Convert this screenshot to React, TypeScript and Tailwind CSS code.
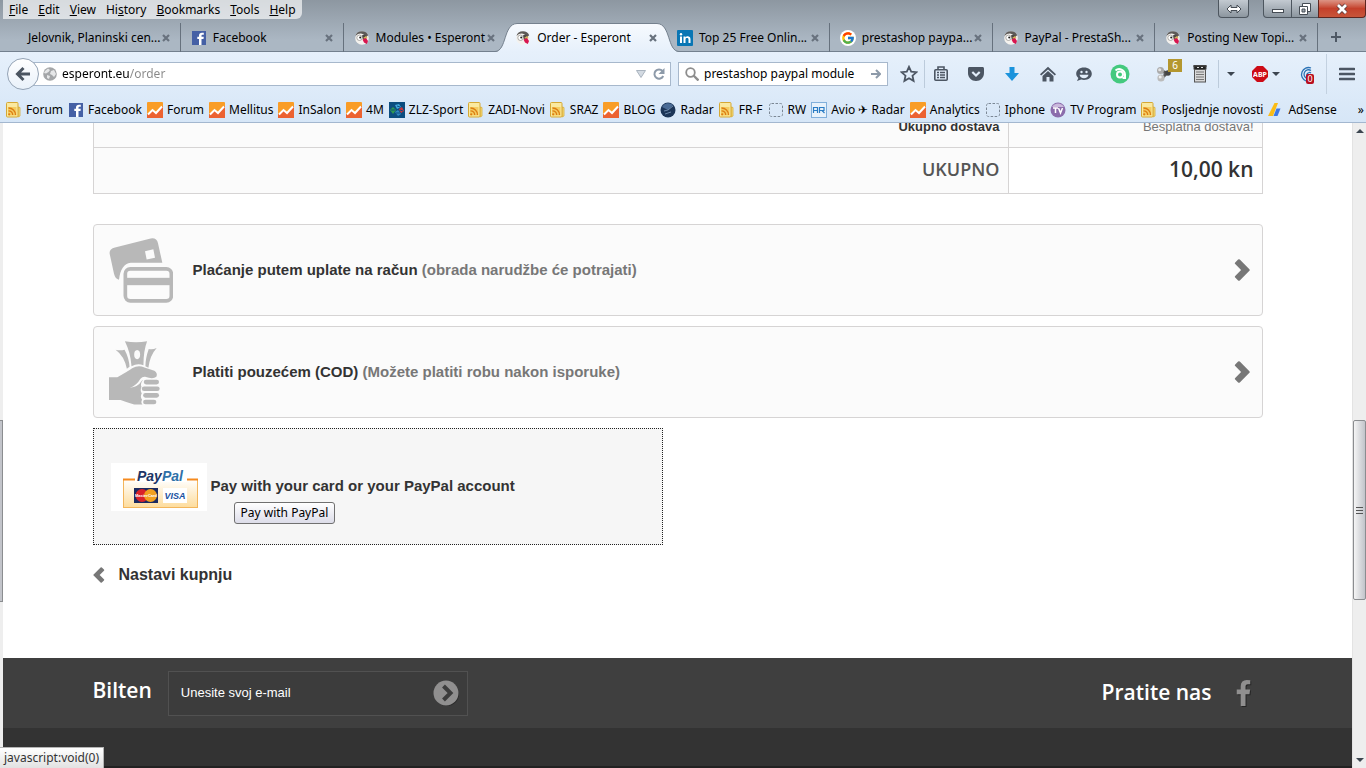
import React from 'react';
import clsx from 'clsx';
import { FcGoogle } from 'react-icons/fc';

const menus = ['File', 'Edit', 'View', 'History', 'Bookmarks', 'Tools', 'Help'];
const accessKeys: Record<string, number> = { History: 2 };

const tabs = [
  { title: 'Jelovnik, Planinski cen...', icon: '', line: true },
  { title: 'Facebook', icon: 'facebook', line: true },
  { title: 'Modules • Esperont', icon: 'presta', line: false },
  { title: 'Order - Esperont', icon: 'presta', active: true, line: false },
  { title: 'Top 25 Free Onlin...', icon: 'linkedin', line: true },
  { title: 'prestashop paypa...', icon: 'google', line: true },
  { title: 'PayPal - PrestaSh...', icon: 'presta', line: true },
  { title: 'Posting New Topi...', icon: 'presta', line: true },
];

const bookmarks = [
  { title: 'Forum', icon: 'rss' },
  { title: 'Facebook', icon: 'facebook' },
  { title: 'Forum', icon: 'analytics' },
  { title: 'Mellitus', icon: 'analytics' },
  { title: 'InSalon', icon: 'analytics' },
  { title: '4M', icon: 'analytics' },
  { title: 'ZLZ-Sport', icon: 'zlz' },
  { title: 'ZADI-Novi', icon: 'rss' },
  { title: 'SRAZ', icon: 'rss' },
  { title: 'BLOG', icon: 'analytics' },
  { title: 'Radar', icon: 'radar' },
  { title: 'FR-F', icon: 'rss' },
  { title: 'RW', icon: 'empty' },
  { title: 'Avio ✈ Radar', icon: 'avio' },
  { title: 'Analytics', icon: 'analytics' },
  { title: 'Iphone', icon: 'empty' },
  { title: 'TV Program', icon: 'tv' },
  { title: 'Posljednje novosti', icon: 'rss' },
  { title: 'AdSense', icon: 'adsense' },
];

function SiteIcon({ name }: { name: string }) {
  const cls = 'h-4 w-4 shrink-0';
  switch (name) {
    case 'facebook':
      return (
        <svg className={cls} viewBox="0 0 16 16">
          <rect x="1" y="1" width="14" height="14" fill="#4560a5" />
          <path d="M8 15V9H6.300V6.800H8V5.500C8 3.600 9.200 2.700 11 2.700h1.800v2.100h-1.200c-.9 0-1.100.4-1.100 1.100v.9h2.300L12.500 9h-2v6z" fill="#fff" />
        </svg>
      );
    case 'presta':
      return (
        <svg className={cls} viewBox="0 0 16 16">
          <circle cx="8" cy="8" r="6.800" fill="#f4f2ee" />
          <path d="M1.500 6C2 3 4.500 1.200 8 1.200c3 0 5.200 1.600 6.200 4L12 7 9.500 4.500C7 2.800 4 3.200 1.500 6z" fill="#5d5a58" />
          <circle cx="5.500" cy="7.800" r="2.700" fill="#fff" stroke="#9a9894" strokeWidth=".8" />
          <circle cx="6.200" cy="7.500" r="1" fill="#1e1e1e" />
          <path d="M8 5.500c1.500-.8 3.500-.5 4.500 1l-1 2.500-2.500.5z" fill="#4a4644" />
          <path d="M9 8l3-2 1.500 2-2 1z" fill="#d8b25a" />
          <path d="M8.500 9.500L12 8l2 3-1.200 3L10 12.500z" fill="#d8164f" />
        </svg>
      );
    case 'linkedin':
      return (
        <svg className={cls} viewBox="0 0 16 16">
          <rect width="16" height="16" rx="1" fill="#0976b4" />
          <path d="M3 6.500h2V13H3zM6.500 6.500h2v1c.9-1.700 5-1.800 5 1.700V13h-2V9.500c0-2-3-1.900-3 0V13h-2z" fill="#fff" />
          <circle cx="4" cy="4.200" r="1.200" fill="#fff" />
        </svg>
      );
    case 'google':
      return (
        <span className="flex h-4 w-4 shrink-0 items-center justify-center rounded-full bg-white">
          <FcGoogle className="h-3.5 w-3.5" />
        </span>
      );
    case 'rss':
      return (
        <svg className={cls} viewBox="0 0 16 16">
          <path d="M12 5l2 .5v8.500l-2 1z" fill="#f6dc7c" stroke="#d8ad3a" strokeWidth=".8" />
          <rect x=".5" y=".5" width="11.500" height="14.500" rx="1" fill="#fae9a0" stroke="#d5a834" />
          <rect x="2" y="5" width="8.500" height="8.500" fill="#f3cd62" />
          <circle cx="3.200" cy="12.300" r="1.100" fill="#dd7d12" />
          <path d="M2.500 8.800c2.400 0 4.200 1.800 4.200 4.200M2.500 6c4 0 7 3 7 7" fill="none" stroke="#dd7d12" strokeWidth="1.300" />
        </svg>
      );
    case 'analytics':
      return (
        <svg className={cls} viewBox="0 0 16 16">
          <rect width="16" height="16" rx="1" fill="#f99d27" />
          <path d="M0 12.500l5-4 4 3 7-7.500v12H0z" fill="#ec6231" />
          <path d="M1 12.500L5.500 8l3.500 3 6-6.500" fill="none" stroke="#fff" strokeWidth="2" />
        </svg>
      );
    case 'zlz':
      return (
        <svg className={cls} viewBox="0 0 16 16">
          <rect width="16" height="16" fill="#0c4d7f" />
          <path d="M1 8l3-3 3 3-3 4z" fill="#2f9a50" />
          <path d="M6 3l4-1 2 3-4 2z" fill="#41a7dc" />
          <path d="M10 7l3-2 2 4-3 2z" fill="#d33436" />
          <path d="M6 10l3-2 3 4-3 2z" fill="#3188c2" />
          <path d="M2 8h4M8 4l3 1M11 8l3 1M7 11h4" stroke="#0c4d7f" />
        </svg>
      );
    case 'radar':
      return (
        <svg className={cls} viewBox="0 0 16 16">
          <circle cx="8" cy="8" r="7.500" fill="#1c3557" />
          <path d="M8 8L2 5a7 7 0 0 1 11-2z" fill="#4a6b95" />
          <path d="M4 9l4-1 5-4M5 12l6-2" stroke="#7f9abb" strokeWidth=".8" fill="none" />
        </svg>
      );
    case 'empty':
      return (
        <svg className={cls} viewBox="0 0 16 16">
          <rect x="1.500" y="1.500" width="13" height="13" rx="2" fill="none" stroke="#7b8794" strokeDasharray="2.500 1.500" />
        </svg>
      );
    case 'avio':
      return (
        <svg className={cls} viewBox="0 0 16 16">
          <rect x=".5" y=".5" width="15" height="15" fill="#e8f2fb" stroke="#2273bd" strokeDasharray="1 1" />
          <path d="M2.500 11V5.500h4V11M2.500 8.500h4M8.500 11V5.500H13v3H8.500M11 8.500l2.500 2.500" fill="none" stroke="#2b7cc4" strokeWidth="1.200" />
        </svg>
      );
    case 'tv':
      return (
        <svg className={cls} viewBox="0 0 16 16">
          <circle cx="8" cy="8" r="7.500" fill="#8b6cab" />
          <path d="M2 5a7 7 0 0 1 12 0z" fill="#cbb9dc" />
          <path d="M3 6h5M5.500 6v5M8.500 6l2 5 2-5" fill="none" stroke="#fff" strokeWidth="1.500" />
        </svg>
      );
    case 'adsense':
      return (
        <svg className={cls} viewBox="0 0 16 16">
          <path d="M6.500 1H10L5 14H0z" fill="#fbbc16" />
          <path d="M8.500 6.500h4L9.500 14H5.500z" fill="#3b78e7" />
        </svg>
      );
    default:
      return null;
  }
}

function Caret({ className }: { className?: string }) {
  return (
    <svg className={clsx('h-1 w-2', className)} viewBox="0 0 8 4">
      <path d="M0 0h8L4 4z" fill="#3d4650" />
    </svg>
  );
}

function Chevron({ className }: { className?: string }) {
  return (
    <svg className={className} viewBox="0 0 16 22">
      <path
        d="M5.800.6L15.400 10.200q.8.800 0 1.600L5.800 21.400q-.9.800-1.700 0L1.200 18.500q-.8-.8 0-1.600L7.100 11 1.200 5.100q-.8-.8 0-1.600L4.100.6q.8-.8 1.700 0z"
        fill="currentColor"
      />
    </svg>
  );
}

function TitleBar() {
  return (
    <div className="flex h-[23px] items-start justify-between">
      <nav className="ml-[3px] flex h-[19px] items-center gap-2.5 rounded-br-md bg-white/65 px-1.5">
        {menus.map((menu) => {
          const k = accessKeys[menu] ?? 0;
          return (
            <button key={menu} type="button" className="leading-4">
              {menu.slice(0, k)}
              <u>{menu[k]}</u>
              {menu.slice(k + 1)}
            </button>
          );
        })}
      </nav>
      <div className="flex h-[18px] items-stretch">
        <button type="button" aria-label="Resize" className="mr-3.5 flex w-[31px] items-center justify-center rounded-b border border-t-0 border-[#4d565f] bg-linear-to-b from-[#c3cad1] to-[#8c969f]">
          <svg className="h-2.5 w-4" viewBox="0 0 16 10">
            <path d="M1 5l4-4v2.500h6V1l4 4-4 4V6.500H5V9z" fill="#fff" stroke="#454c54" />
          </svg>
        </button>
        <button type="button" aria-label="Minimize" className="flex w-[29px] items-center justify-center rounded-bl border border-t-0 border-[#4d565f] bg-linear-to-b from-[#c3cad1] to-[#8c969f]">
          <svg className="h-3 w-3" viewBox="0 0 12 12">
            <rect x=".5" y="6.500" width="11" height="3" fill="#fff" stroke="#454c54" />
          </svg>
        </button>
        <button type="button" aria-label="Restore" className="flex w-[26px] items-center justify-center border-b border-[#4d565f] bg-linear-to-b from-[#c3cad1] to-[#8c969f]">
          <svg className="h-3 w-3" viewBox="0 0 12 12">
            <path d="M3.500.5h8v8h-8z" fill="#fff" stroke="#454c54" />
            <path d="M.5 3.500h8v8h-8z" fill="#fff" stroke="#454c54" />
            <path d="M3 6h3v3H3z" fill="#a0a8b0" stroke="#454c54" />
          </svg>
        </button>
        <button type="button" aria-label="Close" className="flex w-12 items-center justify-center rounded-br border border-t-0 border-[#5e2620] bg-linear-to-b from-[#dc9485] via-[#c4402b] to-[#c8553a]">
          <svg className="h-3 w-3" viewBox="0 0 12 12">
            <path d="M2 2l8 8M10 2l-8 8" stroke="#5b3a3a" strokeWidth="4.500" />
            <path d="M2 2l8 8M10 2l-8 8" stroke="#fff" strokeWidth="2.800" />
          </svg>
        </button>
      </div>
    </div>
  );
}

function TabStrip() {
  return (
    <div className="flex h-[29px] border-b border-[#73808e] pl-[18px]">
      {tabs.map((tab) => (
        <div
          key={tab.title}
          className={clsx(
            'relative flex h-[29px] min-w-0 flex-1 items-center px-2.5',
            tab.line && 'border-r border-r-[#66717d]'
          )}
        >
          {tab.active && (
            <svg className="absolute inset-y-0 -left-2.5 h-full w-[184px]" viewBox="0 0 184 29" preserveAspectRatio="none">
              <defs>
                <linearGradient id="tab" x1="0" y1="0" x2="0" y2="1">
                  <stop offset="0" stopColor="#f7fafe" />
                  <stop offset="1" stopColor="#e6f0fb" />
                </linearGradient>
              </defs>
              <path d="M0 29C12 28 8 1 22 .5H162C176 1 172 28 184 29z" fill="url(#tab)" />
              <path d="M0 28.500C12 28 8 1 22 .5H162C176 1 172 28 184 28.500" fill="none" stroke="#75818e" />
            </svg>
          )}
          <div className="relative flex min-w-0 flex-1 items-center gap-1.5">
            <SiteIcon name={tab.icon} />
            <span className="min-w-0 flex-1 whitespace-nowrap">{tab.title}</span>
            <button type="button" aria-label={`Close ${tab.title}`}>
              <svg className="h-2 w-2" viewBox="0 0 8 8">
                <path d="M1 1l6 6M7 1L1 7" stroke="#68727e" strokeWidth="2.200" />
              </svg>
            </button>
          </div>
        </div>
      ))}
      <button type="button" aria-label="New tab" className="flex w-12 items-center pl-3">
        <svg className="h-3 w-3" viewBox="0 0 12 12">
          <path d="M6 1v10M1 6h10" stroke="#4f5965" strokeWidth="2" />
        </svg>
      </button>
    </div>
  );
}

function ToolButton({ label, className, children }: { label: string; className?: string; children: React.ReactNode }) {
  return (
    <button type="button" aria-label={label} className={clsx('flex h-7 shrink-0 items-center justify-center', className)}>
      {children}
    </button>
  );
}

function NavBar() {
  return (
    <div className="flex h-[45px] items-center pb-0.5">
      <button type="button" aria-label="Back" className="relative z-10 ml-[7px] flex h-8 w-8 shrink-0 items-center justify-center rounded-full border border-[#94a3b5] bg-linear-to-b from-white to-[#e9f1fa]">
        <svg className="h-4 w-4" viewBox="0 0 16 16">
          <path d="M8.500 2L2.500 8l6 6M3 8h12" fill="none" stroke="#4b5561" strokeWidth="3" />
        </svg>
      </button>
      <div className="-ml-2 flex h-6 flex-1 items-center border border-[#a7b8cc] bg-white pr-1 pl-[11px]">
        <svg className="h-3.5 w-3.5 shrink-0" viewBox="0 0 14 14">
          <circle cx="7" cy="7" r="6.800" fill="#a4a6a8" />
          <path d="M2 4l3-2.500L7 3 5.500 5 3 6.500 1 6zM8 4l3-1 2 4-2 3-2-2-2-1zM4 8l3 1-1 3-2-1z" fill="#e6e7e8" />
        </svg>
        <input
          type="text"
          aria-label="Address"
          defaultValue="esperont.eu/order"
          className="ml-[5px] h-5 min-w-0 flex-1 bg-linear-to-r from-black from-[67px] to-[#888] to-[67px] bg-clip-text text-transparent outline-none"
        />
        <button type="button" aria-label="Show history" className="mr-1.5">
          <svg className="h-2.5 w-2.5" viewBox="0 0 10 10">
            <path d="M.5 1.500h9L5 8.500z" fill="#d3dae2" stroke="#a9b3be" />
          </svg>
        </button>
        <button type="button" aria-label="Reload">
          <svg className="h-3.5 w-3.5" viewBox="0 0 14 14">
            <path d="M10.500 4A4.600 4.600 0 1 0 11.200 9" fill="none" stroke="#8d9aa9" strokeWidth="2" />
            <path d="M12.500 1v6H6.500z" fill="#8d9aa9" />
          </svg>
        </button>
      </div>
      <div className="ml-[7px] flex h-6 w-[210px] items-center border border-[#a7b8cc] bg-white px-1.5">
        <svg className="h-3.5 w-3.5 shrink-0" viewBox="0 0 14 14">
          <circle cx="5.500" cy="5.500" r="4.300" fill="none" stroke="#8d8d8d" strokeWidth="1.800" />
          <path d="M8.500 8.500l5 5" stroke="#8d8d8d" strokeWidth="2.400" />
        </svg>
        <input type="text" aria-label="Search" defaultValue="prestashop paypal module" className="ml-[5px] h-5 min-w-0 flex-1 text-black outline-none" />
        <button type="button" aria-label="Go">
          <svg className="h-2.5 w-2.5" viewBox="0 0 10 10">
            <path d="M0 5h9M5 1l4 4-4 4" fill="none" stroke="#8d9aa9" strokeWidth="2" />
          </svg>
        </button>
      </div>

      <ToolButton label="Bookmark this page" className="ml-1.5 w-[30px]">
        <svg className="h-[18px] w-[18px]" viewBox="0 0 18 18">
          <path d="M9 1.800l2.200 4.800 5.200.6-3.900 3.500 1.100 5.200L9 13.300l-4.600 2.600 1.100-5.200L1.600 7.200l5.200-.6z" fill="none" stroke="#4c5663" strokeWidth="1.800" />
        </svg>
      </ToolButton>
      <ToolButton label="Bookmarks list" className="mr-0.5 h-5 w-8 border-l border-[#bccbdb]">
        <svg className="h-4 w-4" viewBox="0 0 16 16">
          <rect x="1.800" y="3.800" width="12.400" height="10.400" rx="1" fill="none" stroke="#4c5663" strokeWidth="1.600" />
          <path d="M5 3.500V1h6v2.500" fill="none" stroke="#4c5663" strokeWidth="1.600" />
          <path d="M4 6.500h2m1 0h5M4 9h2m1 0h5M4 11.500h2m1 0h5" stroke="#4c5663" strokeWidth="1.300" />
        </svg>
      </ToolButton>
      <ToolButton label="Pocket" className="w-9">
        <svg className="h-4 w-4" viewBox="0 0 16 16">
          <path d="M0 2.500C0 1.600.6 1 1.500 1h13c.9 0 1.500.6 1.500 1.500V7c0 4.500-3.500 8-8 8S0 11.500 0 7z" fill="#4c5663" />
          <path d="M4.300 6L8 9.500 11.700 6" fill="none" stroke="#e2edf9" strokeWidth="2.200" />
        </svg>
      </ToolButton>
      <ToolButton label="Downloads" className="w-9">
        <svg className="h-4 w-4" viewBox="0 0 16 16">
          <path d="M5.500 1h5v6H15l-7 8-7-8h4.500z" fill="#1b93dc" />
        </svg>
      </ToolButton>
      <ToolButton label="Home" className="w-9">
        <svg className="h-4 w-4" viewBox="0 0 16 16">
          <path d="M8 .8l8 7.500-1.200 1.300L8 3.400 1.200 9.600 0 8.300z" fill="#4c5663" />
          <path d="M8 5l5.500 5v5.500H9.500V11h-3v4.500h-4V10z" fill="#4c5663" />
        </svg>
      </ToolButton>
      <ToolButton label="Chat" className="w-9">
        <svg className="h-4 w-4" viewBox="0 0 16 16">
          <path d="M8 1.500c4.500 0 7.800 2.700 7.800 6.300S12.500 14 8 14c-1 0-2-.1-2.800-.4L1 15l1.400-3C1 10.900.2 9.500.2 7.800.2 4.200 3.500 1.500 8 1.500z" fill="#4c5663" />
          <circle cx="5.500" cy="6" r="1.200" fill="#e2edf9" />
          <circle cx="10.500" cy="6" r="1.200" fill="#e2edf9" />
          <path d="M3.500 8.800h9C12 11 10.500 12.200 8 12.200S4 11 3.500 8.800z" fill="#e2edf9" />
        </svg>
      </ToolButton>
      <ToolButton label="Avast" className="w-9">
        <svg className="h-5 w-5" viewBox="0 0 20 20">
          <circle cx="10" cy="10" r="9.500" fill="#44c97e" />
          <circle cx="10" cy="10.500" r="3" fill="none" stroke="#fff" strokeWidth="2" />
          <path d="M5.500 6.500a5.800 5.800 0 0 1 9.500 4V14h-2.500" fill="none" stroke="#fff" strokeWidth="2" />
        </svg>
      </ToolButton>
      <ToolButton label="Add-on" className="relative ml-2 w-9">
        <svg className="h-4 w-4" viewBox="0 0 16 16">
          <path d="M5 5l6 2-5 5" stroke="#555" strokeWidth="3" fill="none" />
          <circle cx="4.500" cy="4.500" r="3.500" fill="#aaa" />
          <circle cx="5" cy="12" r="3.600" fill="#bbb" />
          <circle cx="12" cy="7" r="2.800" fill="#444" />
          <circle cx="3.700" cy="3.700" r="1.500" fill="#e4e4e4" />
          <circle cx="4.200" cy="11" r="1.500" fill="#eee" />
        </svg>
        <span className="absolute -top-px right-0 flex h-[13px] w-3.5 items-center justify-center bg-[#b4972f] text-[10px] leading-3 text-white">6</span>
      </ToolButton>
      <ToolButton label="Server" className="w-9">
        <svg className="h-[18px] w-4" viewBox="0 0 16 18">
          <path d="M1 1h14M2 .5h12v4H2z" fill="#222" stroke="#444" />
          <rect x="2.500" y="4.500" width="11" height="12.500" fill="#d8d8d8" stroke="#555" />
          <path d="M4 7h8M4 9.500h8M4 12h8M4 14.500h8" stroke="#777" />
          <path d="M5 2.500h2M9 2.500h2" stroke="#ddd" />
        </svg>
      </ToolButton>
      <ToolButton label="More" className="h-5 w-6 border-l border-[#bccbdb]">
        <Caret />
      </ToolButton>
      <ToolButton label="Adblock Plus" className="ml-1.5 w-9 gap-1">
        <svg className="h-4 w-4" viewBox="0 0 16 16">
          <path d="M5 0h6l5 5v6l-5 5H5l-5-5V5z" fill="#cd0b16" />
          <text x="8" y="10.500" textAnchor="middle" fontSize="7" fontWeight="700" fill="#fff">ABP</text>
        </svg>
        <Caret />
      </ToolButton>
      <ToolButton label="Trackers" className="relative mr-0.5 ml-1 w-9">
        <svg className="h-4 w-4" viewBox="0 0 16 16">
          <path d="M13 2A6.800 6.800 0 1 0 8 15M13 4.500a4.500 4.500 0 1 0-4 8M13 7a2.500 2.500 0 1 0-3 4" fill="none" stroke="#2a72b5" strokeWidth="1.300" />
        </svg>
        <span className="absolute right-2.5 bottom-1 flex h-2.5 w-2 items-center justify-center rounded-xs bg-[#b80e1e] text-[9px] leading-none text-white">0</span>
      </ToolButton>
      <ToolButton label="Open menu" className="h-10 w-10 border-l border-[#c3d1e0]">
        <svg className="h-4 w-4" viewBox="0 0 16 16">
          <path d="M1 3h14M1 8h14M1 13h14" stroke="#4c5663" strokeWidth="2.600" strokeLinecap="round" />
        </svg>
      </ToolButton>
    </div>
  );
}

function BookmarksBar() {
  return (
    <div className="flex h-[26px] items-center justify-between border-b border-[#a3b7cf] pl-[6px]">
      {bookmarks.map((bookmark, i) => (
        <a key={i} href="#" className="flex items-center gap-1 whitespace-nowrap">
          <SiteIcon name={bookmark.icon} />
          {bookmark.title}
        </a>
      ))}
      <button type="button" aria-label="More bookmarks" className="pr-0.5 pl-4">
        »
      </button>
    </div>
  );
}

function CardsIcon() {
  return (
    <svg className="h-[65px] w-16" viewBox="57 65 192 194" fill="#b8b8b8">
      <path
        fillRule="evenodd"
        d="M75 93L182 66Q200 63 204 80L217 139H122Q92 143 87 190Q76 188 72 172L59 112Q57 97 75 93zM165 104L190 98L195 124L170 129z"
      />
      <rect x="106" y="157" width="138" height="96" rx="15" fill="none" stroke="#b8b8b8" strokeWidth="11" />
      <rect x="106" y="184" width="138" height="22" />
    </svg>
  );
}

function CashIcon() {
  return (
    <svg className="h-[65px] w-[51px]" viewBox="57 378 154 194" fill="#b8b8b8">
      <path
        fillRule="evenodd"
        d="M105 381Q139 387 172 381Q161 410 161 453Q143 446 125 456Q122 415 105 381zM142 407Q133 408 133 421Q133 434 142 435Q151 434 151 421Q151 408 142 407z"
      />
      <path d="M77 406Q90 410 104 406Q118 432 119 458L111 464Q104 426 77 406z" />
      <path d="M201 401Q188 407 177 404Q167 432 167 456L176 461Q180 424 201 401z" />
      <path d="M57 489H82Q110 474 127 462Q146 451 164 460L194 470Q205 477 200 488Q190 496 166 488Q158 487 152 494Q140 515 120 521Q145 519 156 500L160 497Q150 510 155 518Q150 530 156 538Q150 549 157 557Q152 565 158 572H133Q108 564 92 558H57z" />
      <rect x="162" y="497" width="46" height="14" rx="7" />
      <rect x="156" y="517" width="54" height="14" rx="7" />
      <rect x="160" y="537" width="48" height="14" rx="7" />
      <rect x="160" y="557" width="40" height="14" rx="7" />
    </svg>
  );
}

function PayPalBadge() {
  return (
    <svg className="h-12 w-24 shrink-0" viewBox="0 0 96 48" role="img" aria-label="PayPal">
      <defs>
        <linearGradient id="pp" x1="0" y1="0" x2="0" y2="1">
          <stop offset="0" stopColor="#fff" />
          <stop offset="1" stopColor="#fddc9c" />
        </linearGradient>
      </defs>
      <rect width="96" height="48" fill="#fff" />
      <rect x="12.500" y="16.500" width="74" height="28" fill="url(#pp)" stroke="#f3b65c" />
      <path d="M12 16.500h75" stroke="#f58a1f" strokeWidth="2" />
      <rect x="24" y="9" width="52" height="10" fill="#fff" />
      <text x="26" y="18" fontSize="14" fontWeight="700" fontStyle="italic" fill="#1d3566">
        Pay<tspan fill="#2f71a8">Pal</tspan>
      </text>
      <rect x="23" y="25" width="24" height="15" fill="#1b2a61" />
      <circle cx="31" cy="32.500" r="6.500" fill="#d9222a" />
      <circle cx="39.500" cy="32.500" r="6.500" fill="#f2a01f" />
      <text x="35" y="34" fontSize="4" fontWeight="700" textAnchor="middle" fill="#fff">MasterCard</text>
      <rect x="52" y="25" width="24" height="15" fill="#fff" />
      <text x="64" y="36" fontSize="9" fontWeight="700" fontStyle="italic" textAnchor="middle" fill="#19519f">VISA</text>
    </svg>
  );
}

function PaymentOption({ icon, title, note }: { icon: React.ReactNode; title: string; note: string }) {
  return (
    <a href="#" className="flex h-[92px] items-center rounded border border-[#d6d4d4] bg-[#fbfbfb] pr-3 pl-[15px] text-[15px] font-bold text-[#333]">
      <span className="w-[84px]">{icon}</span>
      <span className="flex-1">
        {title} <span className="text-[#777]">{note}</span>
      </span>
      <Chevron className="h-[22px] w-4 text-[#777]" />
    </a>
  );
}

function OrderPage() {
  return (
    <main className="flex min-w-0 flex-1 flex-col overflow-hidden bg-white font-['Liberation_Sans',Arial,sans-serif] text-[13px] leading-[18px] text-[#777]">
      <div className="mx-auto w-full max-w-[1170px] flex-1">
        <table className="-mt-[13px] w-full border-collapse text-right">
          <tbody>
            <tr>
              <td className="border border-[#d6d4d4] bg-[#fbfbfb] px-2 pt-[7px] pb-[11px] font-bold text-[#333]">Ukupno dostava</td>
              <td className="w-[254px] border border-[#d6d4d4] bg-[#fbfbfb] px-2 pt-[7px] pb-[11px]">Besplatna dostava!</td>
            </tr>
            <tr className="h-[46px] font-['Open_Sans',sans-serif]">
              <td className="border border-[#d6d4d4] bg-[#fbfbfb] px-2 pb-1 text-lg leading-6 font-semibold text-[#555]">UKUPNO</td>
              <td className="border border-[#d6d4d4] px-2 pb-1 text-[21px] leading-6 font-semibold text-[#333]">10,00 kn</td>
            </tr>
          </tbody>
        </table>

        <div className="mt-[30px] flex flex-col gap-2.5">
          <PaymentOption icon={<CardsIcon />} title="Plaćanje putem uplate na račun" note="(obrada narudžbe će potrajati)" />
          <PaymentOption icon={<CashIcon />} title="Platiti pouzećem (COD)" note="(Možete platiti robu nakon isporuke)" />
        </div>

        <div className="mt-2.5 flex h-[117px] w-[570px] items-center border border-dotted border-[#222] bg-[#f6f6f6] pl-[17px]">
          <PayPalBadge />
          <div className="pt-6 pl-1">
            <p className="text-[15px] leading-6 font-bold text-[#333]">Pay with your card or your PayPal account</p>
            <button type="button" className="mt-1 ml-[23px] flex h-[22px] items-center rounded-[3px] border border-[#707070] bg-linear-to-b from-white to-[#dddde9] px-1.5 font-['Noto_Sans',sans-serif] text-xs text-black">
              Pay with PayPal
            </button>
          </div>
        </div>

        <a href="#" className="mt-5 flex w-fit items-center gap-3.5 text-base leading-5 font-bold text-[#333]">
          <Chevron className="h-4 w-3 rotate-180 text-[#777]" />
          Nastavi kupnju
        </a>
      </div>

      <footer className="font-['Open_Sans',sans-serif]">
        <div className="bg-[#3f3f3f]">
          <div className="mx-auto flex h-[70px] max-w-[1170px] items-center text-[21px] font-semibold text-white">
            <label htmlFor="newsletter" className="mr-4 pb-1.5">Bilten</label>
            <form className="flex h-[45px] w-[300px] items-center border border-[#515151] bg-[#3c3c3c] pr-2 pl-3">
              <input
                id="newsletter"
                type="email"
                placeholder="Unesite svoj e-mail"
                className="min-w-0 flex-1 font-['Liberation_Sans',Arial,sans-serif] text-[13px] font-normal outline-none placeholder:text-white"
              />
              <button type="button" aria-label="OK">
                <svg className="h-[26px] w-[26px]" viewBox="0 0 26 26">
                  <circle cx="14" cy="14" r="12" fill="#2b2b2b" />
                  <circle cx="13" cy="13" r="12.500" fill="#908f8f" />
                  <path d="M10.500 6l7 7-7 7" fill="none" stroke="#3c3c3c" strokeWidth="4" />
                </svg>
              </button>
            </form>
            <span className="ml-auto pb-0.5">Pratite nas</span>
            <a href="#" aria-label="Facebook" className="mr-3 ml-6">
              <svg className="h-[26px] w-[15px] drop-shadow-[1px_1px_0_rgba(0,0,0,0.4)]" viewBox="479 0 864 1664">
                <path
                  d="M1343 12v264h-157q-86 0-116 36t-30 108v189h293l-39 296h-254v759H734V905H479V609h255V391q0-186 104-288.500T1115 0q147 0 228 12z"
                  fill="#908f8f"
                />
              </svg>
            </a>
          </div>
        </div>
        <div className="h-10 border-b-2 border-[#222] bg-[#333]" />
      </footer>
    </main>
  );
}

export default function App() {
  return (
    <div className="relative flex h-screen flex-col overflow-hidden font-['Noto_Sans',sans-serif] text-xs text-black">
      <header className="shrink-0 bg-linear-to-b from-[#8d97a1] to-[#abb7c3] to-[40px]">
        <TitleBar />
        <TabStrip />
        <div className="bg-linear-to-b from-[#e6f0fb] to-[#d6e6f7]">
          <NavBar />
          <BookmarksBar />
        </div>
      </header>

      <div className="flex min-h-0 flex-1">
        <div className="flex w-[3px] flex-col bg-[#eee]">
          <div className="flex-[298]" />
          <div className="flex-[180] border-y border-r border-[#8b8d90] bg-[#c2c4ca]" />
          <div className="flex-[167]" />
        </div>
        <OrderPage />
        <div className="flex w-3.5 flex-col items-center border-l border-[#e3e3e3] bg-[#eee] py-1.5">
          <Caret className="rotate-180" />
          <div className="flex-[288]" />
          <div className="flex w-full flex-[178] items-center justify-center rounded-xs border border-[#8b8d90] bg-linear-to-r from-[#f5f5f5] to-[#c2c4ca]">
            <svg className="h-2 w-2" viewBox="0 0 8 8">
              <path d="M0 1.500h7M0 4.500h7M0 7.500h7" stroke="#555" />
            </svg>
          </div>
          <div className="flex-[159]" />
          <Caret />
        </div>
      </div>

      <div className="absolute bottom-0 left-0 h-[21px] border-t border-r border-[#b5b5b5] bg-linear-to-b from-white to-[#e2e2e2] px-1 leading-5 text-[#333]">javascript:void(0)</div>
    </div>
  );
}
